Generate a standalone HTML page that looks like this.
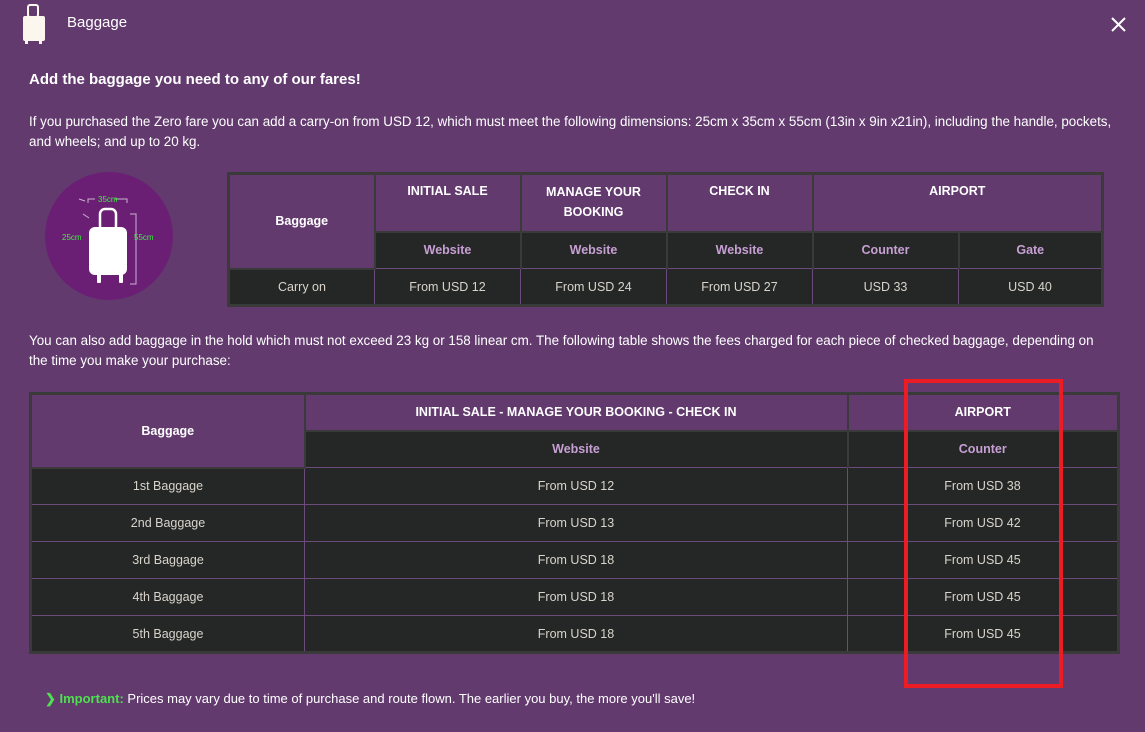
<!DOCTYPE html>
<html><head><style>
body{margin:0;width:1145px;height:732px;background:#623a6e;font-family:"Liberation Sans",sans-serif;color:#fff;position:relative;overflow:hidden}
.abs{position:absolute}
table{position:absolute;border-collapse:collapse;table-layout:fixed;border:3px solid #3a3a3a;font-size:12.5px}
td{text-align:center;padding:0}
td.h{background:#623a6e;border:2px solid #3a3a3a;font-weight:bold;color:#fff}
td.s{background:#252726;border:2px solid #3a3a3a;border-bottom:1px solid #6b4a7c;font-weight:bold;color:#c79fd4}
td.d{background:#252726;border:1px solid #6b4a7c;color:#d8d4cc}
</style></head><body>
<svg class="abs" style="left:22px;top:4px" width="24" height="40" viewBox="0 0 24 40"><rect x="6" y="1" width="10" height="12" rx="2" fill="none" stroke="#fbf6ee" stroke-width="2"/><rect x="1" y="12" width="22" height="25" rx="2" fill="#fbf6ee"/><rect x="3" y="36" width="3" height="4" fill="#fbf6ee"/><rect x="17" y="36" width="3" height="4" fill="#fbf6ee"/></svg>
<div class="abs" style="left:67px;top:14px;font-size:15px">Baggage</div>
<svg class="abs" style="left:1111px;top:17px" width="15" height="15"><path d="M1 1L14 14M14 1L1 14" stroke="#fff" stroke-width="2"/></svg>
<div class="abs" style="left:29px;top:71px;font-size:15px;font-weight:bold">Add the baggage you need to any of our fares!</div>
<div class="abs" style="left:29px;top:112px;font-size:13.4px;line-height:20px;width:1092px">If you purchased the Zero fare you can add a carry-on from USD 12, which must meet the following dimensions: 25cm x 35cm x 55cm (13in x 9in x21in), including the handle, pockets, and wheels; and up to 20 kg.</div>
<svg class="abs" style="left:45px;top:172px" width="128" height="128" viewBox="0 0 128 128"><circle cx="64" cy="64" r="64" fill="#6a1f75"/>
<rect x="55" y="37" width="16" height="22" rx="5" fill="none" stroke="#fff" stroke-width="2.5"/><rect x="44" y="55" width="38" height="48" rx="6" fill="#fff"/><rect x="52" y="100" width="4" height="11" rx="1" fill="#fff"/><rect x="74" y="100" width="4" height="11" rx="1" fill="#fff"/>
<path d="M43 31V27H50M70 27H82V31M85 42H91V112H85M34 27l6 2M38 42l6 4" stroke="#c9b2cf" fill="none"/>
<text x="53" y="30" font-size="8" fill="#3cf03c" font-family="Liberation Sans">35cm</text>
<text x="17" y="68" font-size="8" fill="#3cf03c" font-family="Liberation Sans">25cm</text>
<text x="89" y="68" font-size="8" fill="#3cf03c" font-family="Liberation Sans">55cm</text></svg>
<table style="left:227px;top:172px;width:877px">
<colgroup><col style="width:146px"><col style="width:146px"><col style="width:146px"><col style="width:146px"><col style="width:146px"><col></colgroup>
<tr style="height:58px"><td class="h" rowspan="2">Baggage</td><td class="h" style="vertical-align:top;padding-top:9px">INITIAL SALE</td><td class="h" style="vertical-align:top;padding-top:7px;line-height:20px">MANAGE YOUR<br>BOOKING</td><td class="h" style="vertical-align:top;padding-top:9px">CHECK IN</td><td class="h" colspan="2" style="vertical-align:top;padding-top:9px">AIRPORT</td></tr>
<tr style="height:37px"><td class="s">Website</td><td class="s">Website</td><td class="s">Website</td><td class="s">Counter</td><td class="s">Gate</td></tr>
<tr style="height:37px"><td class="d">Carry on</td><td class="d">From USD 12</td><td class="d">From USD 24</td><td class="d">From USD 27</td><td class="d">USD 33</td><td class="d">USD 40</td></tr>
</table>
<div class="abs" style="left:29px;top:331px;font-size:13.4px;line-height:20px;width:1080px">You can also add baggage in the hold which must not exceed 23 kg or 158 linear cm. The following table shows the fees charged for each piece of checked baggage, depending on the time you make your purchase:</div>
<table style="left:29px;top:392px;width:1091px">
<colgroup><col style="width:274px"><col style="width:543px"><col></colgroup>
<tr style="height:37px"><td class="h" rowspan="2">Baggage</td><td class="h">INITIAL SALE - MANAGE YOUR BOOKING - CHECK IN</td><td class="h">AIRPORT</td></tr>
<tr style="height:37px"><td class="s">Website</td><td class="s">Counter</td></tr>
<tr style="height:37px"><td class="d">1st Baggage</td><td class="d">From USD 12</td><td class="d">From USD 38</td></tr>
<tr style="height:37px"><td class="d">2nd Baggage</td><td class="d">From USD 13</td><td class="d">From USD 42</td></tr>
<tr style="height:37px"><td class="d">3rd Baggage</td><td class="d">From USD 18</td><td class="d">From USD 45</td></tr>
<tr style="height:37px"><td class="d">4th Baggage</td><td class="d">From USD 18</td><td class="d">From USD 45</td></tr>
<tr style="height:37px"><td class="d">5th Baggage</td><td class="d">From USD 18</td><td class="d">From USD 45</td></tr>
</table>
<div class="abs" style="left:904px;top:379px;width:151px;height:301px;border:4px solid #ec1c24"></div>
<div class="abs" style="left:45px;top:691px;font-size:13px"><span style="color:#4ee04e;font-weight:bold">❯ Important:</span> Prices may vary due to time of purchase and route flown. The earlier you buy, the more you'll save!</div>
</body></html>
